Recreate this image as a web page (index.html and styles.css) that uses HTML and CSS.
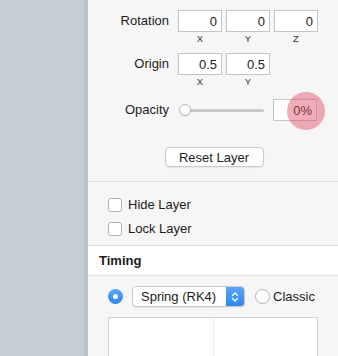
FILE: index.html
```html
<!DOCTYPE html>
<html lang="en">
<head>
  <meta charset="UTF-8" />
  <title>Layer Inspector</title>
  <link rel="stylesheet" href="styles.css">
</head>
<body>
  <div class="app">
    <aside class="sidebar"></aside>

    <main class="inspector">
      <!-- Transform -->
      <section class="transform">
        <div class="prop-row">
          <label class="prop-label">Rotation</label>
          <div class="fields">
            <div class="field"><input class="num" type="text" value="0"><span class="axis">X</span></div>
            <div class="field"><input class="num" type="text" value="0"><span class="axis">Y</span></div>
            <div class="field"><input class="num" type="text" value="0"><span class="axis">Z</span></div>
          </div>
        </div>

        <div class="prop-row">
          <label class="prop-label">Origin</label>
          <div class="fields">
            <div class="field"><input class="num" type="text" value="0.5"><span class="axis">X</span></div>
            <div class="field"><input class="num" type="text" value="0.5"><span class="axis">Y</span></div>
          </div>
        </div>

        <div class="prop-row opacity-row">
          <label class="prop-label">Opacity</label>
          <div class="fields">
            <div class="slider"><span class="track"></span><span class="knob"></span></div>
            <div class="pct-wrap">
              <input class="num" type="text" value="0%">
              <span class="touch"></span>
            </div>
          </div>
        </div>

        <div class="btn-row">
          <button class="btn">Reset Layer</button>
        </div>
      </section>

      <!-- Visibility -->
      <section class="toggles">
        <label class="check"><span class="box"></span>Hide Layer</label>
        <label class="check"><span class="box"></span>Lock Layer</label>
      </section>

      <header class="section-title">Timing</header>

      <section class="timing">
        <div class="curve-row">
          <span class="radio radio-on"></span>
          <div class="popup">
            <span class="popup-text">Spring (RK4)</span>
            <span class="stepper">
              <svg width="8" height="12" viewBox="0 0 8 12">
                <path d="M1.5 4.5 L4 2 L6.5 4.5 M1.5 7.5 L4 10 L6.5 7.5" fill="none" stroke="#fff" stroke-width="1.3" stroke-linecap="round" stroke-linejoin="round"/>
              </svg>
            </span>
          </div>
          <span class="radio"></span>
          <span class="radio-label">Classic</span>
        </div>
        <div class="curve-box"><span class="curve-mid"></span></div>
      </section>
    </main>
  </div>
</body>
</html>
```

FILE: styles.css
```css
body { margin: 0; font-family: "Liberation Sans", Arial, sans-serif; font-size: 13px; color: #1c1c1c; background: #f6f6f6; }
.app { display: flex; height: 356px; overflow: hidden; }
.sidebar { width: 84px; flex-shrink: 0; background: #c7cdd5; border-right: 4px solid #bcc2ca; }
.inspector { flex: 1; background: #f6f6f6; }

/* transform section */
.transform { padding: 10px 0 14px; border-bottom: 1px solid #dedede; }
.prop-row { display: grid; grid-template-columns: 81px auto; column-gap: 9px; margin-bottom: 7px; }
.prop-row:nth-child(2) { margin-bottom: 10px; }
.prop-label { text-align: right; line-height: 22px; height: 22px; }
.fields { display: flex; gap: 4px; }
.field { display: flex; flex-direction: column; width: 44px; }
.num {
  box-sizing: border-box;
  width: 44px;
  height: 22px;
  margin: 0;
  padding: 0 4px 0 2px;
  border: 1px solid #c6c6c6;
  background: #fff;
  font-family: inherit;
  font-size: 13px;
  color: #1c1c1c;
  text-align: right;
  outline: none;
}
.axis { height: 14px; line-height: 14px; font-size: 9.5px; color: #333; text-align: center; }

.opacity-row { margin-bottom: 0; }
.opacity-row .fields { gap: 9px; }
.slider { position: relative; width: 86px; height: 22px; display: flex; align-items: center; }
.track { display: block; margin-left: 7px; width: 79px; height: 3px; border-radius: 2px; background: #c9c9c9; }
.knob {
  position: absolute;
  left: 1px;
  top: 5px;
  box-sizing: border-box;
  width: 12px;
  height: 12px;
  border-radius: 50%;
  background: #fff;
  border: 1px solid #b9b9b9;
  box-shadow: 0 1px 1px rgba(0,0,0,0.08);
}
.pct-wrap { position: relative; width: 44px; height: 22px; }
.touch {
  position: absolute;
  left: 14px;
  top: -7px;
  width: 38px;
  height: 38px;
  border-radius: 50%;
  background: rgba(222, 72, 98, 0.45);
}

.btn-row { display: flex; justify-content: center; margin-top: 26px; }
.btn {
  box-sizing: border-box;
  width: 99px;
  height: 20px;
  margin-left: 2px;
  padding: 0;
  border: 1px solid #cacaca;
  border-radius: 4px;
  background: #fff;
  box-shadow: 0 1px 1px rgba(0,0,0,0.06);
  font-family: inherit;
  font-size: 13px;
  color: #1c1c1c;
}

/* toggles */
.toggles { display: flex; flex-direction: column; gap: 10px; padding: 16px 20px 9px; border-bottom: 1px solid #dedede; }
.check { display: flex; align-items: center; gap: 6px; height: 14px; line-height: 14px; }
.box {
  box-sizing: border-box;
  width: 14px;
  height: 14px;
  border: 1px solid #b4b4b4;
  border-radius: 3px;
  background: #fff;
}

/* timing */
.section-title { height: 29px; line-height: 29px; padding-left: 11px; background: #fff; font-weight: bold; border-bottom: 1px solid #dedede; }
.timing { padding: 10px 20px 0; }
.curve-row { display: flex; align-items: center; height: 21px; }
.radio {
  box-sizing: border-box;
  width: 15px;
  height: 15px;
  border-radius: 50%;
  background: #fff;
  border: 1px solid #b4b4b4;
  flex-shrink: 0;
}
.radio-on {
  position: relative;
  border: none;
  background: linear-gradient(#5aa5f8, #2f87ee);
}
.radio-on::after {
  content: "";
  position: absolute;
  left: 5px;
  top: 5px;
  width: 5px;
  height: 5px;
  border-radius: 50%;
  background: #fff;
}
.popup {
  display: flex;
  box-sizing: border-box;
  width: 113px;
  height: 21px;
  margin: 0 10px 0 9px;
  border: 1px solid #cacaca;
  border-radius: 4px;
  background: #fff;
  box-shadow: 0 1px 1px rgba(0,0,0,0.06);
  overflow: hidden;
}
.popup-text { flex: 1; line-height: 19px; padding-left: 8px; }
.stepper { width: 18px; display: flex; align-items: center; justify-content: center; background: linear-gradient(#5aa5f8, #2f87ee); }
.radio-label { margin-left: 3px; }

.curve-box {
  position: relative;
  box-sizing: border-box;
  height: 60px;
  margin-top: 10px;
  background: #fff;
  border: 1px solid #d2d2d2;
}
.curve-mid { position: absolute; left: 104px; top: 0; bottom: 0; width: 1px; background: #ececec; }
```
